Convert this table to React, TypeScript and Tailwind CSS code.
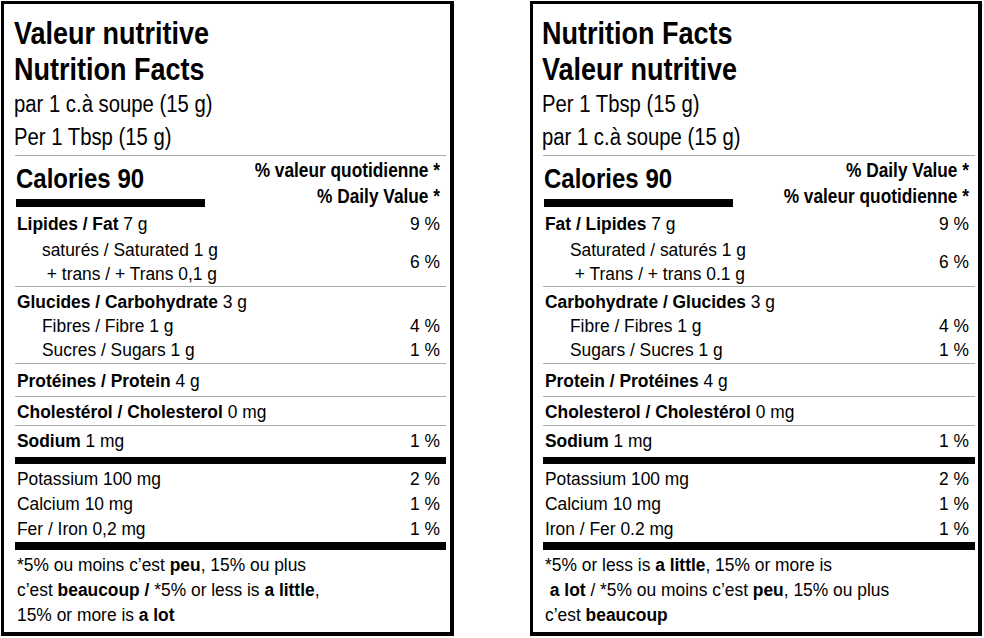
import React from "react";

type Row = {
  bold?: string;
  text?: string;
  dv?: string;
};

interface LabelProps {
  title: [string, string];
  serving: [string, string];
  dvHeader: [string, string];
  fat: Row;
  saturated: string;
  trans: string;
  satDv: string;
  carb: Row;
  fibre: Row;
  sugars: Row;
  protein: Row;
  cholesterol: Row;
  sodium: Row;
  minerals: Row[];
  footnote: React.ReactNode[];
  padding: string;
}

// the label face is a condensed grotesque, stretch Liberation Sans upward around the baseline
const tall = "origin-[50%_76%] scale-y-[1.155]";
const rowTall = "origin-[50%_74%] scale-y-[1.1]";

function Line({ row, indent }: { row: Row; indent?: boolean }) {
  return (
    <div className={`flex justify-between leading-[24px] ${rowTall}`}>
      <span className={indent ? "pl-[25px]" : ""}>
        {row.bold && <b>{row.bold}</b>}
        {row.text}
      </span>
      {row.dv && <span className="pr-[6px]">{row.dv}</span>}
    </div>
  );
}

function Label(props: LabelProps) {
  return (
    <div
      className={`flex h-[635px] flex-col border-b-4 border-l-[3px] border-r-4 border-t-[3px] border-black bg-white ${props.padding}`}
    >
      <div className="-ml-[1px] pt-[13px] text-[27px] font-bold leading-[36px]">
        <div className={tall}>{props.title[0]}</div>
        <div className={tall}>{props.title[1]}</div>
      </div>
      <div className="-ml-[1px] text-[20.3px] leading-[33px]">
        <div className={`${tall} scale-y-[1.14]`}>{props.serving[0]}</div>
        <div className={`${tall} scale-y-[1.14]`}>{props.serving[1]}</div>
      </div>

      <div className="flex h-[52px] justify-between border-t border-[#aaaaaa]">
        <div className="flex flex-col pl-[1px] pt-[10px]">
          <div className={`${tall} text-[24px] font-bold leading-[28px]`}>Calories 90</div>
          <div className="mt-[5px] h-[8px] w-[189px] bg-black" />
        </div>
        <div className="pr-[6px] pt-[2px] text-right text-[17.3px] font-bold leading-[26px]">
          <div className={`${tall} scale-y-[1.1]`}>{props.dvHeader[0]}</div>
          <div className={`${tall} scale-y-[1.1]`}>{props.dvHeader[1]}</div>
        </div>
      </div>

      <div className="pl-[2px] text-[17.4px]">
        <div className="pt-[5px]">
          <Line row={props.fat} />
          <div className="mt-[2px] flex items-center justify-between leading-[24px]">
            <div className="pl-[25px]">
              <div className={rowTall}>{props.saturated}</div>
              <div className={`whitespace-pre ${rowTall}`}>{props.trans}</div>
            </div>
            <span className={`inline-block pr-[6px] ${rowTall}`}>{props.satDv}</span>
          </div>
        </div>
      </div>

      <div className="border-t border-[#aaaaaa] pb-[1px] pl-[2px] pt-[3px] text-[17.4px]">
        <Line row={props.carb} />
        <Line row={props.fibre} indent />
        <Line row={props.sugars} indent />
      </div>

      <div className="border-t border-[#aaaaaa] pb-[3px] pl-[2px] pt-[5px] text-[17.4px]">
        <Line row={props.protein} />
      </div>

      <div className="border-t border-[#aaaaaa] pb-[1px] pl-[2px] pt-[3px] text-[17.4px]">
        <Line row={props.cholesterol} />
      </div>

      <div className="border-t border-[#aaaaaa] pb-[4px] pl-[2px] pt-[3px] text-[17.4px]">
        <Line row={props.sodium} />
      </div>

      <div className="h-[7px] bg-black" />

      <div className="pl-[2px] pt-[3px] text-[17.4px] leading-[25px]">
        {props.minerals.map((m) => (
          <div key={m.text} className={`flex justify-between ${rowTall}`}>
            <span>{m.text}</span>
            <span className="pr-[6px]">{m.dv}</span>
          </div>
        ))}
      </div>

      <div className="h-[8px] bg-black" />

      <div className="pl-[2px] pt-[3px] text-[17.4px] leading-[25px]">
        {props.footnote.map((f, i) => (
          <div key={i} className={`whitespace-pre ${rowTall}`}>
            {f}
          </div>
        ))}
      </div>
    </div>
  );
}

export default function App() {
  return (
    <div className="flex min-h-[638px] w-[984px] gap-[76px] bg-white pl-[1px] pt-[1px] font-['Liberation_Sans',Arial,sans-serif] text-black">
      <div className="w-[453px]">
        <Label
          padding="pl-[11px] pr-[4px]"
          title={["Valeur nutritive", "Nutrition Facts"]}
          serving={["par 1 c.à soupe (15 g)", "Per 1 Tbsp (15 g)"]}
          dvHeader={["% valeur quotidienne *", "% Daily Value *"]}
          fat={{ bold: "Lipides / Fat", text: " 7 g", dv: "9 %" }}
          saturated="saturés / Saturated 1 g"
          trans=" + trans / + Trans 0,1 g"
          satDv="6 %"
          carb={{ bold: "Glucides / Carbohydrate", text: " 3 g" }}
          fibre={{ text: "Fibres / Fibre 1 g", dv: "4 %" }}
          sugars={{ text: "Sucres / Sugars 1 g", dv: "1 %" }}
          protein={{ bold: "Protéines / Protein", text: " 4 g" }}
          cholesterol={{ bold: "Cholestérol / Cholesterol", text: " 0 mg" }}
          sodium={{ bold: "Sodium", text: " 1 mg", dv: "1 %" }}
          minerals={[
            { text: "Potassium 100 mg", dv: "2 %" },
            { text: "Calcium 10 mg", dv: "1 %" },
            { text: "Fer / Iron 0,2 mg", dv: "1 %" },
          ]}
          footnote={[
            <>
              *5% ou moins c’est <b>peu</b>, 15% ou plus
            </>,
            <>
              c’est <b>beaucoup /</b> *5% or less is <b>a little</b>,
            </>,
            <>
              15% or more is <b>a lot</b>
            </>,
          ]}
        />
      </div>
      <div className="w-[452px]">
        <Label
          padding="pl-[10px] pr-[3px]"
          title={["Nutrition Facts", "Valeur nutritive"]}
          serving={["Per 1 Tbsp (15 g)", "par 1 c.à soupe (15 g)"]}
          dvHeader={["% Daily Value *", "% valeur quotidienne *"]}
          fat={{ bold: "Fat / Lipides", text: " 7 g", dv: "9 %" }}
          saturated="Saturated / saturés 1 g"
          trans=" + Trans / + trans 0.1 g"
          satDv="6 %"
          carb={{ bold: "Carbohydrate / Glucides", text: " 3 g" }}
          fibre={{ text: "Fibre / Fibres 1 g", dv: "4 %" }}
          sugars={{ text: "Sugars / Sucres 1 g", dv: "1 %" }}
          protein={{ bold: "Protein / Protéines", text: " 4 g" }}
          cholesterol={{ bold: "Cholesterol / Cholestérol", text: " 0 mg" }}
          sodium={{ bold: "Sodium", text: " 1 mg", dv: "1 %" }}
          minerals={[
            { text: "Potassium 100 mg", dv: "2 %" },
            { text: "Calcium 10 mg", dv: "1 %" },
            { text: "Iron / Fer 0.2 mg", dv: "1 %" },
          ]}
          footnote={[
            <>
              *5% or less is <b>a little</b>, 15% or more is
            </>,
            <>
              {" "}
              <b>a lot</b> / *5% ou moins c’est <b>peu</b>, 15% ou plus
            </>,
            <>
              c’est <b>beaucoup</b>
            </>,
          ]}
        />
      </div>
    </div>
  );
}
